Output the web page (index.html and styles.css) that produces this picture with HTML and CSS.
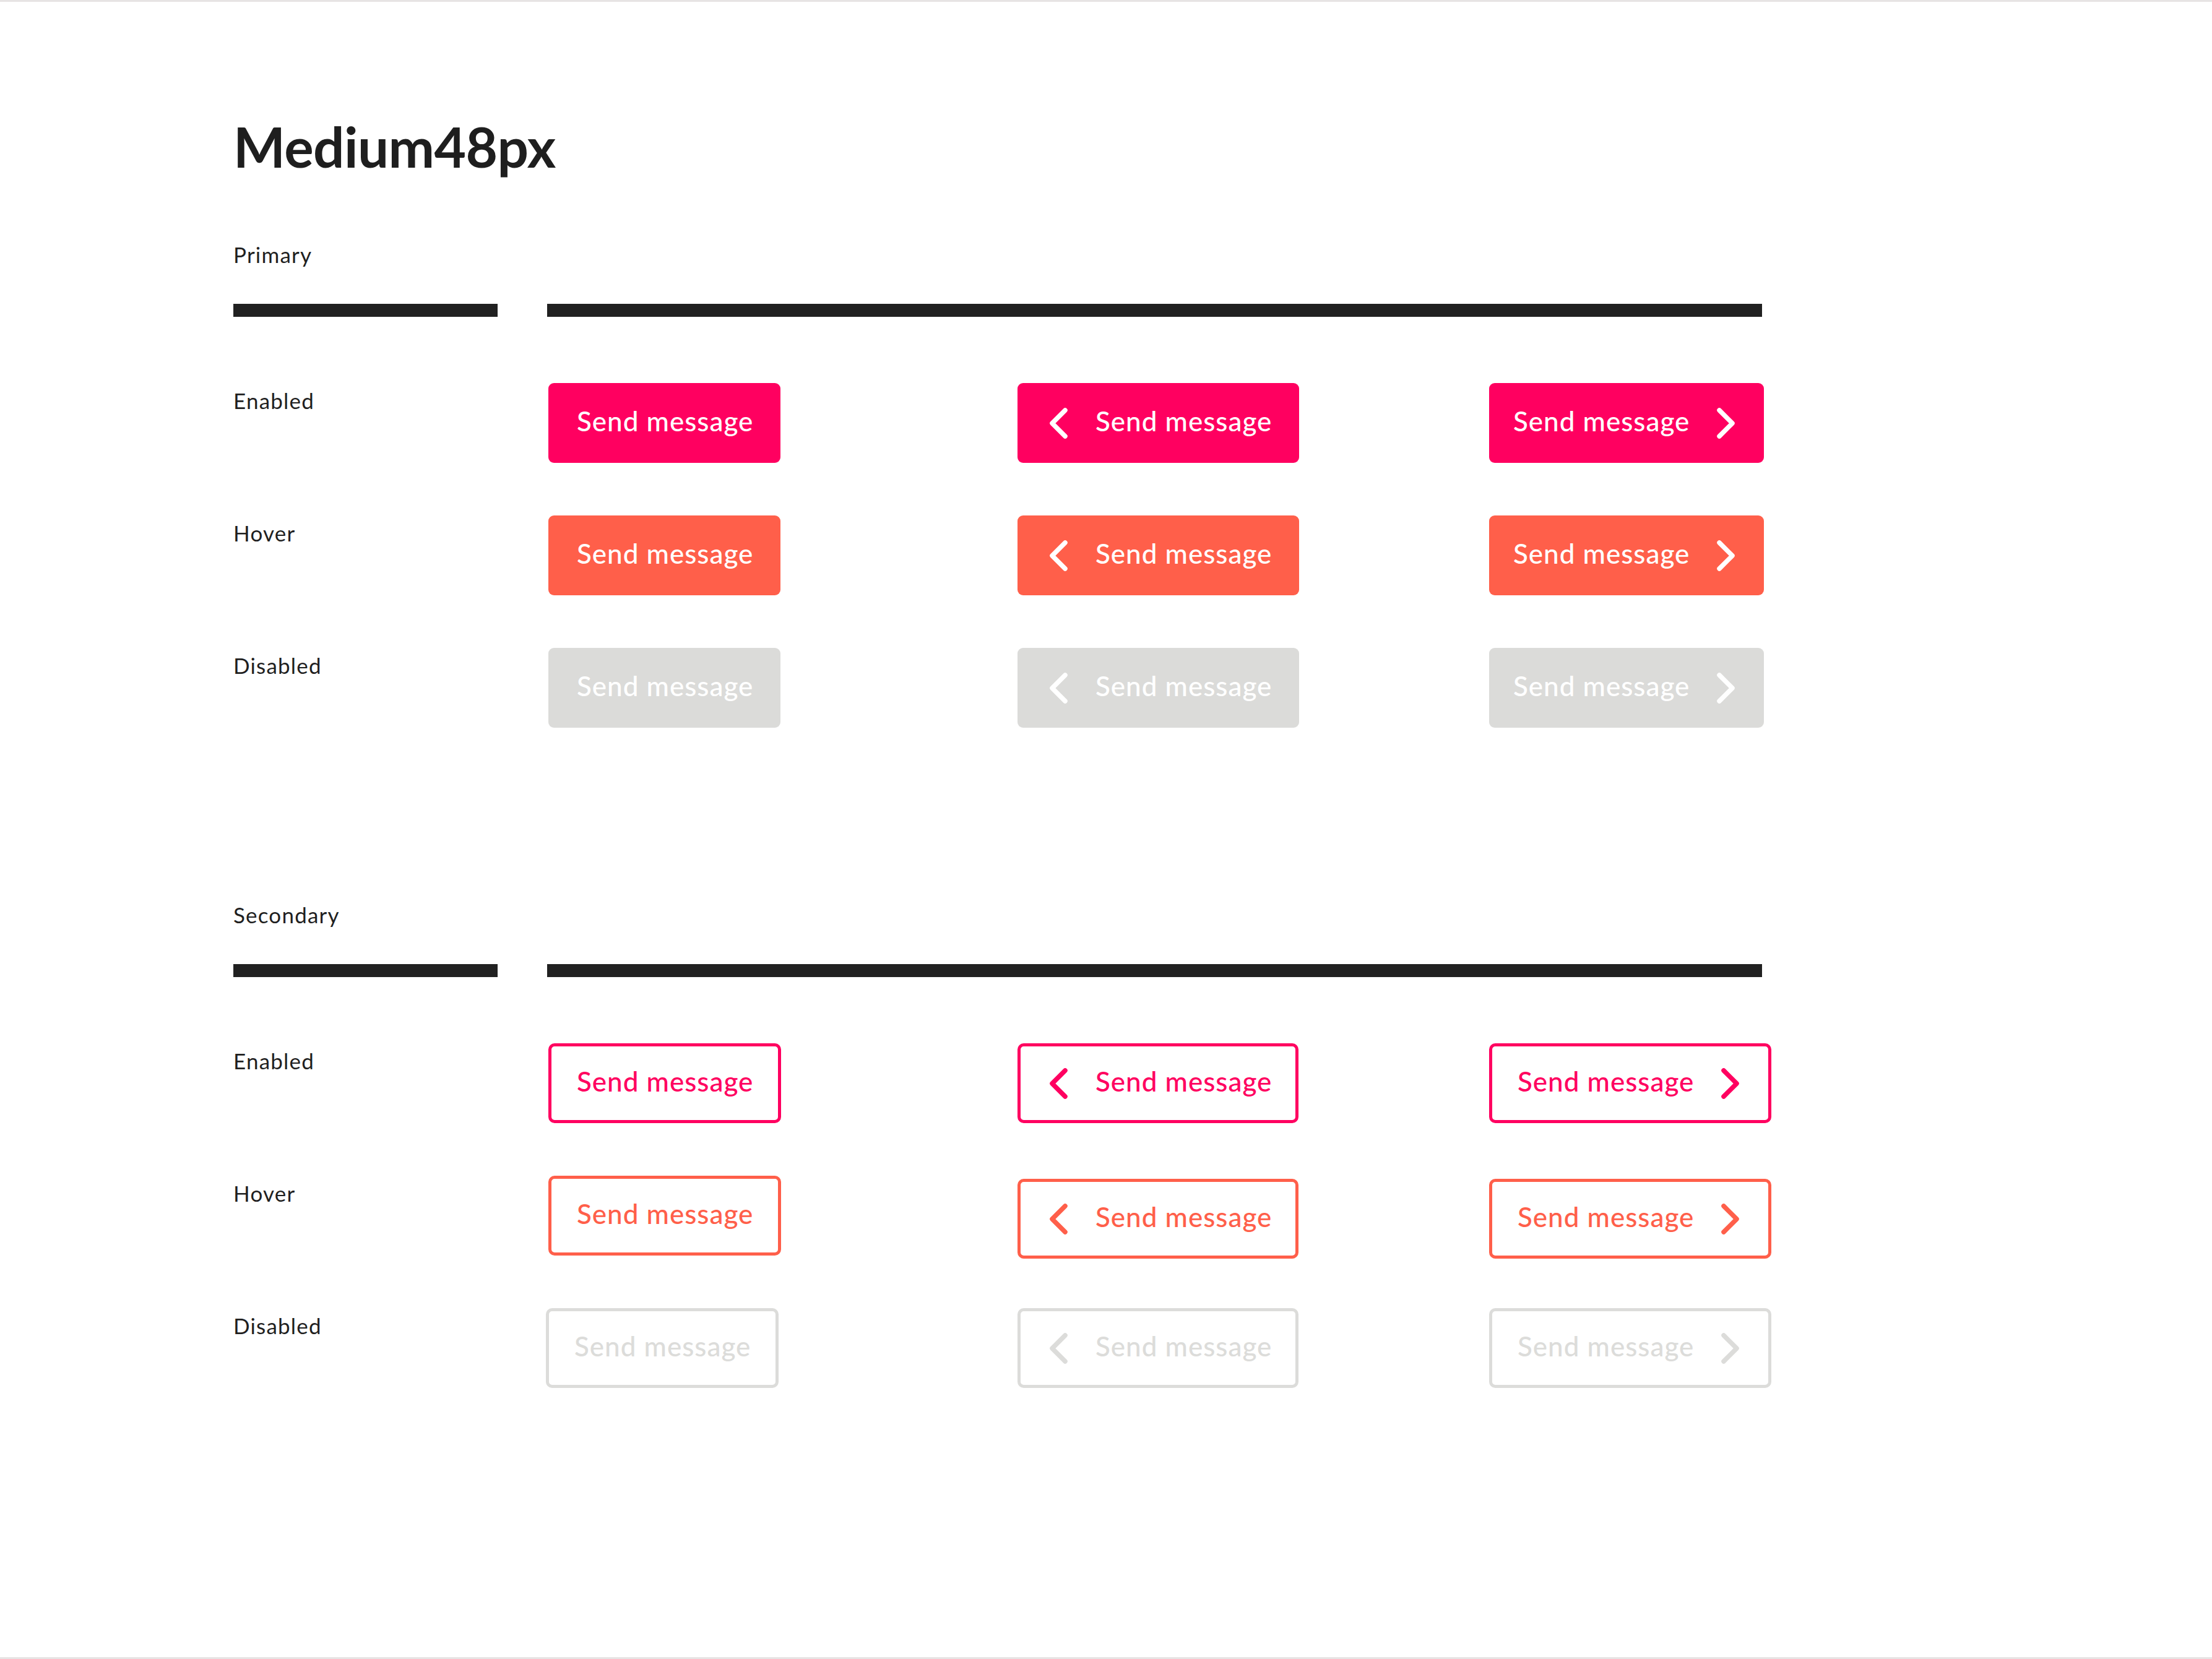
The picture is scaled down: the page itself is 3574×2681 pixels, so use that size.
FILE: index.html
```html
<!DOCTYPE html>
<html lang="en">
<head>
<meta charset="utf-8">
<title>Medium48px</title>
<link rel="stylesheet" href="styles.css">
</head>
<body>
<div class="page">
  <h1 class="title">Medium48px</h1>

  <section class="section section--primary">
    <div class="section-label">Primary</div>
    <div class="bars"><span class="bar"></span><span class="bar"></span></div>
    <div class="rows">
      <div class="row">
        <div class="row-label">Enabled</div>
        <button class="btn btn--solid btn--pink"><span>Send message</span></button>
        <button class="btn btn--solid btn--pink btn--lead"><svg class="chev" viewBox="0 0 29 50"><polyline points="25,4 4,25 25,46"/></svg><span>Send message</span></button>
        <button class="btn btn--solid btn--pink btn--trail"><span>Send message</span><svg class="chev" viewBox="0 0 29 50"><polyline points="4,4 25,25 4,46"/></svg></button>
      </div>
      <div class="row">
        <div class="row-label">Hover</div>
        <button class="btn btn--solid btn--coral"><span>Send message</span></button>
        <button class="btn btn--solid btn--coral btn--lead"><svg class="chev" viewBox="0 0 29 50"><polyline points="25,4 4,25 25,46"/></svg><span>Send message</span></button>
        <button class="btn btn--solid btn--coral btn--trail"><span>Send message</span><svg class="chev" viewBox="0 0 29 50"><polyline points="4,4 25,25 4,46"/></svg></button>
      </div>
      <div class="row">
        <div class="row-label">Disabled</div>
        <button class="btn btn--solid btn--gray" disabled><span>Send message</span></button>
        <button class="btn btn--solid btn--gray btn--lead" disabled><svg class="chev" viewBox="0 0 29 50"><polyline points="25,4 4,25 25,46"/></svg><span>Send message</span></button>
        <button class="btn btn--solid btn--gray btn--trail" disabled><span>Send message</span><svg class="chev" viewBox="0 0 29 50"><polyline points="4,4 25,25 4,46"/></svg></button>
      </div>
    </div>
  </section>

  <section class="section section--secondary">
    <div class="section-label">Secondary</div>
    <div class="bars"><span class="bar"></span><span class="bar"></span></div>
    <div class="rows">
      <div class="row">
        <div class="row-label">Enabled</div>
        <button class="btn btn--outline btn--pink"><span>Send message</span></button>
        <button class="btn btn--outline btn--pink btn--lead"><svg class="chev" viewBox="0 0 29 50"><polyline points="25,4 4,25 25,46"/></svg><span>Send message</span></button>
        <button class="btn btn--outline btn--pink btn--trail"><span>Send message</span><svg class="chev" viewBox="0 0 29 50"><polyline points="4,4 25,25 4,46"/></svg></button>
      </div>
      <div class="row">
        <div class="row-label">Hover</div>
        <button class="btn btn--outline btn--coral"><span>Send message</span></button>
        <button class="btn btn--outline btn--coral btn--lead btn--low"><svg class="chev" viewBox="0 0 29 50"><polyline points="25,4 4,25 25,46"/></svg><span>Send message</span></button>
        <button class="btn btn--outline btn--coral btn--trail btn--low"><span>Send message</span><svg class="chev" viewBox="0 0 29 50"><polyline points="4,4 25,25 4,46"/></svg></button>
      </div>
      <div class="row">
        <div class="row-label">Disabled</div>
        <button class="btn btn--outline btn--gray btn--nudge" disabled><span>Send message</span></button>
        <button class="btn btn--outline btn--gray btn--lead" disabled><svg class="chev" viewBox="0 0 29 50"><polyline points="25,4 4,25 25,46"/></svg><span>Send message</span></button>
        <button class="btn btn--outline btn--gray btn--trail" disabled><span>Send message</span><svg class="chev" viewBox="0 0 29 50"><polyline points="4,4 25,25 4,46"/></svg></button>
      </div>
    </div>
  </section>
</div>
</body>
</html>
```

FILE: styles.css
```css
html, body {
  margin: 0;
  padding: 0;
  background: #ffffff;
}

body {
  font-family: "Lato", "Noto Sans", sans-serif;
  color: #1f1f1f;
}

.page {
  box-sizing: border-box;
  height: 2681px;
  border-top: 3px solid #e7e4e4;
  border-bottom: 3px solid #e7e4e4;
  padding: 187px 0 0 377px;
}

.title {
  margin: 0;
  font-size: 89px;
  line-height: 90px;
  font-weight: 700;
  color: #1e1e1e;
  letter-spacing: -0.6px;
  padding-top: 2px;
}

.section--primary {
  margin-top: 109px;
}

.section--secondary {
  margin-top: 282px;
}

.section-label {
  font-size: 35px;
  line-height: 40px;
  font-weight: 400;
  letter-spacing: 1.2px;
}

.bars {
  display: grid;
  grid-template-columns: 427px 1963px;
  column-gap: 80px;
  margin-top: 60px;
}

.bar {
  display: block;
  height: 21px;
  background: #212121;
}

.rows {
  display: flex;
  flex-direction: column;
  gap: 85px;
  margin-top: 107px;
}

.row {
  display: grid;
  grid-template-columns: 509px 758px 762px auto;
  align-items: start;
  justify-items: start;
  height: 129px;
}

.row-label {
  font-size: 35px;
  line-height: 40px;
  letter-spacing: 1.2px;
  padding-top: 8px;
}

.btn {
  box-sizing: border-box;
  display: inline-flex;
  align-items: center;
  height: 129px;
  margin: 0;
  padding: 0 44px 0 46px;
  gap: 44px;
  border: 0;
  border-radius: 9px;
  font-family: "Lato", "Noto Sans", sans-serif;
  font-size: 44px;
  font-weight: 500;
  letter-spacing: 1px;
  line-height: 1;
  white-space: nowrap;
  cursor: pointer;
}

.btn span {
  display: block;
  padding-bottom: 7px;
}

.btn--lead {
  padding-left: 52px;
  gap: 45px;
}

.btn--trail {
  padding-left: 39px;
  padding-right: 47px;
}

.chev {
  display: block;
  width: 29px;
  height: 50px;
  flex: none;
}

.chev polyline {
  fill: none;
  stroke: currentColor;
  stroke-width: 7.5;
  stroke-linecap: round;
  stroke-linejoin: round;
}

/* solid */
.btn--solid {
  color: #ffffff;
}

.btn--solid.btn--pink {
  background: #ff0060;
}

.btn--solid.btn--coral {
  background: #ff5f4a;
}

.btn--solid.btn--gray {
  background: #dbdbd9;
  cursor: default;
}

/* outline */
.btn--outline {
  background: #ffffff;
  border: 5px solid currentColor;
  border-radius: 10px;
  padding-left: 41px;
  padding-right: 40px;
}

.btn--outline.btn--lead {
  padding-left: 47px;
  padding-right: 38px;
}

.btn--outline.btn--trail {
  padding-left: 41px;
  padding-right: 47px;
}

.btn--outline.btn--pink {
  color: #ff0060;
}

.btn--outline.btn--coral {
  color: #ff5f4a;
}

.btn--outline.btn--gray {
  color: #dcdcda;
  cursor: default;
}

.btn--low {
  margin-top: 5px;
  margin-bottom: -5px;
}

.btn--nudge {
  margin-left: -4px;
}
```
